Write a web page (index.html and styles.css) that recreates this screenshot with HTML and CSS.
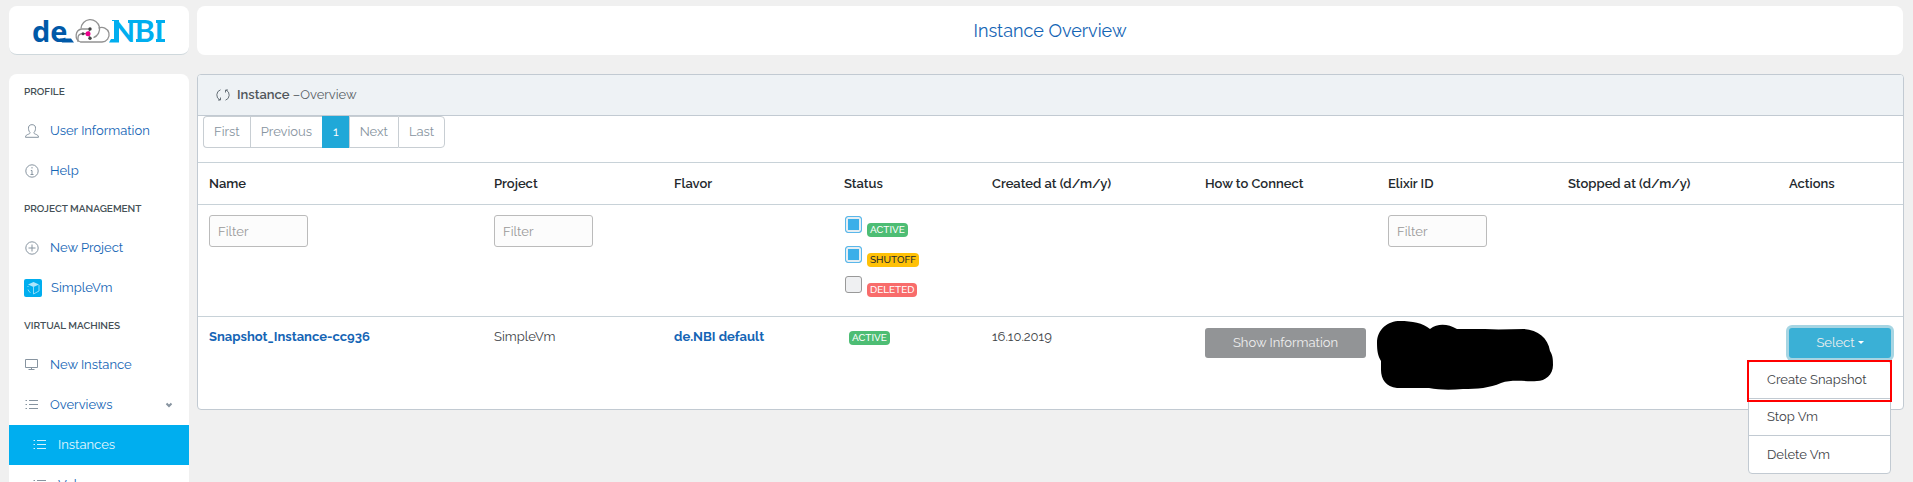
FILE: index.html
```html
<!DOCTYPE html>
<html lang="en">
<head>
<meta charset="utf-8">
<title>Instance Overview</title>
<link rel="stylesheet" href="styles.css">
</head>
<body>
<svg class="defs" aria-hidden="true">
  <symbol id="i-user" viewBox="0 0 14 14"><path d="M5 8.500C3.500 7 3.300 4.500 3.600 3C4 1.200 5.500.7 7 .7s3 .5 3.400 2.300C10.700 4.500 10.500 7 9 8.500c0 1 .4 1.300 1.500 1.700 1.700.6 2.900 1 3 3.100H.5c.1-2.100 1.300-2.500 3-3.100C4.600 9.800 5 9.500 5 8.500z"/></symbol>
  <symbol id="i-info" viewBox="0 0 14 14"><circle cx="7" cy="7" r="6.200"/><path d="M7 3v1.500M5.800 6.500H7v4M5.500 10.500h3"/></symbol>
  <symbol id="i-plus" viewBox="0 0 14 14"><circle cx="7" cy="7" r="6.200"/><path d="M7 3.500v7M3.500 7h7"/></symbol>
  <symbol id="i-screen" viewBox="0 0 14 14"><path d="M.5 1.500h12v8H.5zM6.500 9.500v2M3.500 11.500h6"/></symbol>
  <symbol id="i-list" viewBox="0 0 14 14"><path d="M.5 2.500h1.500M.5 6.500h1.500M.5 10.500h1.500M4 2.500h9M4 6.500h9M4 10.500h9"/></symbol>
</svg>
<div class="page">
  <header class="top">
    <div class="brand">
      <svg class="logo" viewBox="0 -6 134 40" role="img" aria-label="de.NBI">
        <text class="logo-de" x="0" y="26">de</text>
        <path d="M28 22.500h11l3 4H30z" fill="#0059a8"/>
        <path d="M77 26.500l2-3.500h3V5h-2V4h7v22.500z" fill="#00aeef"/>
        <g fill="none" stroke="#929292" stroke-width="1.300"><path d="M58 13h-8.500a6.800 6.800 0 0 0-1 13H70a7.300 7.300 0 1 0-3.500-13.800"/><path d="M49 12.500a9.300 9.300 0 1 1 12.500 9.200M46 26v-4q0-4.300 5-4.300"/></g>
        <path d="M51 17.700h5l2-4.700M56 17.700l2 4.600" fill="none" stroke="#555"/>
        <circle cx="51" cy="17.700" r="1.500" fill="#444"/><circle cx="58" cy="13" r="1.700" fill="#444"/><circle cx="58" cy="22.300" r="1.700" fill="#444"/><circle cx="56" cy="17.700" r="2.500" fill="#ec008c"/>
        <text class="logo-nbi" x="80" y="26">NBI</text>
        <path d="M96 4h9v3h-9zM104 4h7v3h-7zM104 23h7v3h-7zM124 4h9v3h-9zM124 23h9v3h-9z" fill="#00aeef"/>
      </svg>
    </div>
    <div class="heading"><h1>Instance Overview</h1></div>
  </header>
  <div class="body">
    <nav class="sidebar">
      <h2>Profile</h2>
      <a href="#"><svg class="ico"><use href="#i-user"/></svg>User Information</a>
      <a href="#"><svg class="ico"><use href="#i-info"/></svg>Help</a>
      <h2>Project Management</h2>
      <a href="#"><svg class="ico"><use href="#i-plus"/></svg>New Project</a>
      <a href="#" class="simple"><svg class="cube" viewBox="0 0 18 18"><rect width="18" height="18" rx="2" fill="#00aeef"/><path d="M4 5.500L9.500 3 15 5.500 9.500 8z" fill="#aee6fb"/><path d="M9.500 8v7L15 12V6M4 7v1M4 10.500l1 2 1.500 1" fill="none" stroke="#8fdcf9"/></svg>SimpleVm</a>
      <h2>Virtual Machines</h2>
      <a href="#"><svg class="ico"><use href="#i-screen"/></svg>New Instance</a>
      <a href="#"><svg class="ico"><use href="#i-list"/></svg>Overviews<svg class="chev" viewBox="0 0 8 6"><path d="M1.500 1.500L4 4l2.500-2.500"/></svg></a>
      <a href="#" class="sub active"><svg class="ico"><use href="#i-list"/></svg>Instances</a>
      <a href="#" class="sub"><svg class="ico"><use href="#i-list"/></svg>Volumes</a>
    </nav>
    <main class="panel">
      <div class="panel-head"><svg class="refresh" viewBox="0 0 14 14"><path d="M4.500 1.800A5.500 5.500 0 0 0 4 12M9.500 12.200A5.500 5.500 0 0 0 10 2M2 12h2.500V9.500M12 2H9.500v2.500"/></svg><p><strong>Instance</strong> –Overview</p></div>
      <div class="pages"><button>First</button><button>Previous</button><button class="current">1</button><button>Next</button><button>Last</button></div>
      <table>
        <colgroup><col class="c-name"><col class="c-project"><col class="c-flavor"><col class="c-status"><col class="c-created"><col class="c-connect"><col class="c-elixir"><col class="c-stopped"><col class="c-actions"></colgroup>
        <thead><tr><th>Name</th><th>Project</th><th>Flavor</th><th>Status</th><th>Created at (d/m/y)</th><th>How to Connect</th><th>Elixir ID</th><th>Stopped at (d/m/y)</th><th>Actions</th></tr></thead>
        <tbody>
          <tr class="filters">
            <td><input class="filter" type="text" placeholder="Filter" aria-label="Filter by name"></td>
            <td><input class="filter" type="text" placeholder="Filter" aria-label="Filter by project"></td>
            <td></td>
            <td>
              <label class="check"><input type="checkbox" checked><span class="badge green">ACTIVE</span></label>
              <label class="check"><input type="checkbox" checked><span class="badge yellow">SHUTOFF</span></label>
              <label class="check"><input type="checkbox"><span class="badge red">DELETED</span></label>
            </td>
            <td></td><td></td>
            <td><input class="filter" type="text" placeholder="Filter" aria-label="Filter by Elixir ID"></td>
            <td></td><td></td>
          </tr>
          <tr class="instance">
            <td><a href="#">Snapshot_Instance-cc936</a></td>
            <td>SimpleVm</td>
            <td><a href="#">de.NBI default</a></td>
            <td class="state"><span class="badge green">ACTIVE</span></td>
            <td>16.10.2019</td>
            <td><button class="btn grey">Show Information</button></td>
            <td class="elixir"><svg class="redacted" viewBox="0 0 176 69"><path d="M0 22C0 8 11 0 23 0c12 0 23 2 30 8 8-6 18-5 27 0h28c14 1 26 0 39 0 14 1 24 9 26 22 3 5 3 9 3 14 0 10-8 16-16 16-11 1-24-2-36 2-11 5-24 6-38 6-12 1-24 1-34-1H20C9 66 4 58 4 49v-9C1 35 0 30 0 22z"/></svg></td>
            <td></td>
            <td class="actions">
              <button class="btn blue">Select<span class="caret"></span></button>
              <div class="menu"><button class="marked">Create Snapshot</button><button>Stop Vm</button><button>Delete Vm</button></div>
            </td>
          </tr>
        </tbody>
      </table>
    </main>
  </div>
</div>
</body>
</html>
```
FILE: styles.css
```css
* { box-sizing: border-box; }
body { margin: 0; height: 100vh; overflow: hidden; background: #f0f0f0; color: #3e4347; font: 13px/20px Raleway, Lato, sans-serif; }
h1, h2, p { margin: 0; }
a { color: #1565b5; text-decoration: none; }
button { font: inherit; cursor: pointer; }
.defs { display: none; }
.page { padding: 6px 10px 0 9px; }
.top, .body { display: grid; grid-template-columns: 180px 1fr; gap: 8px; }
.top { margin-bottom: 19px; }
.brand, .heading { height: 49px; background: #fff; border-radius: 8px; display: flex; align-items: center; justify-content: center; }
.brand { border-bottom: 1px solid #cfd8dc; }
.logo { width: 134px; height: 40px; }
.logo-de { fill: #0059a8; font: bold 29px "Open Sans", sans-serif; }
.logo-nbi { fill: #00aeef; font: bold 30px Lato, sans-serif; }
h1 { color: #1565b5; font-size: 18px; font-weight: 400; line-height: 24px; }
.sidebar { background: #fff; border-radius: 8px 8px 0 0; }
.sidebar h2 { padding: 0 15px; font-size: 10px; line-height: 36px; height: 37px; font-weight: 600; text-transform: uppercase; color: #455056; }
.sidebar a { display: flex; align-items: center; gap: 11px; height: 40px; padding: 0 16px; }
.sidebar .simple { gap: 9px; padding-left: 15px; }
.sidebar .sub { padding-left: 24px; }
.sidebar .active { background: #00aeef; color: #e3f6fd; }
.ico { width: 14px; height: 14px; fill: none; stroke: #8794a0; }
.active .ico { stroke: #d5f2fd; }
.cube { width: 18px; height: 18px; }
.chev { width: 8px; height: 6px; margin-left: auto; fill: none; stroke: #8794a0; stroke-width: 2; }
.panel { align-self: start; background: #fff; border: 1px solid #c2cad2; border-radius: 4px; }
.panel-head { display: flex; align-items: center; gap: 7px; height: 41px; padding: 0 18px; background: #eef2f5; border-bottom: 1px solid #c2cad2; border-radius: 3px 3px 0 0; color: #5b6268; }
.panel-head strong { color: #50565b; font-weight: 600; }
.refresh { width: 14px; height: 14px; fill: none; stroke: #667078; }
.pages { display: flex; padding-left: 5px; margin-bottom: 14px; }
.pages button { height: 32px; padding: 0 10px; background: #fff; border: 1px solid #c8ced3; border-right-width: 0; color: #8794a0; }
.pages button:first-child { border-radius: 4px 0 0 4px; }
.pages button:last-child { border-right-width: 1px; border-radius: 0 4px 4px 0; }
.pages .current { background: #20a8d8; border-color: #20a8d8; color: #fff; }
table { width: 100%; table-layout: fixed; border-collapse: collapse; }
.c-name { width: 285px; } .c-project { width: 180px; } .c-flavor { width: 170px; }
.c-status { width: 148px; } .c-created { width: 213px; } .c-connect { width: 183px; }
.c-elixir { width: 180px; } .c-stopped { width: 221px; } .c-actions { width: 125px; }
th { height: 42px; padding: 0 11px; text-align: left; font-weight: 600; color: #23282c; border-top: 1px solid #c8d2d8; }
td { padding: 10px 11px; vertical-align: top; border-top: 1px solid #c8d2d8; }
.filters td { height: 112px; }
.instance td { height: 92px; }
.instance a { font-weight: bold; }
.filter { width: 99px; height: 32px; display: block; padding: 0 8px; font: inherit; background: #fcfcfc; border: 1px solid #bbb; border-radius: 3px; }
.filter::placeholder { color: #999; }
.check { display: flex; align-items: flex-start; gap: 5px; height: 30px; padding-left: 1px; }
.check input { appearance: none; width: 17px; height: 17px; margin: 1px 0 0; background: #eff0f2; border: 1px solid #999; border-radius: 3px; }
.check input:checked { background: #3bafe9; border-color: #5ab7ea; box-shadow: inset 0 0 0 2px #e6eef3; }
.badge { display: inline-block; padding: 0 3px; border-radius: 4px; font-size: 10px; line-height: 14px; font-weight: 500; }
.check .badge { margin-top: 8px; }
.green { background: #4dbd74; color: #fff; }
.yellow { background: #ffc107; color: #23282c; }
.red { background: #f86c6b; color: #fff; }
.instance .state { padding-left: 16px; }
.btn { display: block; width: 100%; height: 30px; margin-top: 1px; border: 0; border-radius: 3px; color: #eee; }
.grey { background: #929496; }
.blue { background: #3ab0d6; box-shadow: 0 0 0 3px #a6d5e3; }
.caret { display: inline-block; margin-left: 3px; vertical-align: 3px; border: 3px solid transparent; border-top-color: #fff; border-bottom: 0; }
.instance td.elixir { padding: 0; }
.redacted { display: block; width: 176px; height: 69px; margin-top: 4px; }
.instance .actions { position: relative; padding-right: 12px; }
.menu { position: absolute; right: 12px; top: 43px; width: 143px; background: #fff; border: 1px solid #c2cad2; border-radius: 4px; }
.menu button { display: block; width: 100%; height: 37px; padding: 0 18px; text-align: left; white-space: nowrap; background: none; color: #3e4347; border: 0; border-bottom: 1px solid #c2cad2; }
.menu button:last-child { border-bottom: 0; }
.menu .marked { position: relative; height: 38px; }
.marked::after { content: ""; position: absolute; inset: -1px -2px -4px -2px; border: 2px solid #f00; }
```
